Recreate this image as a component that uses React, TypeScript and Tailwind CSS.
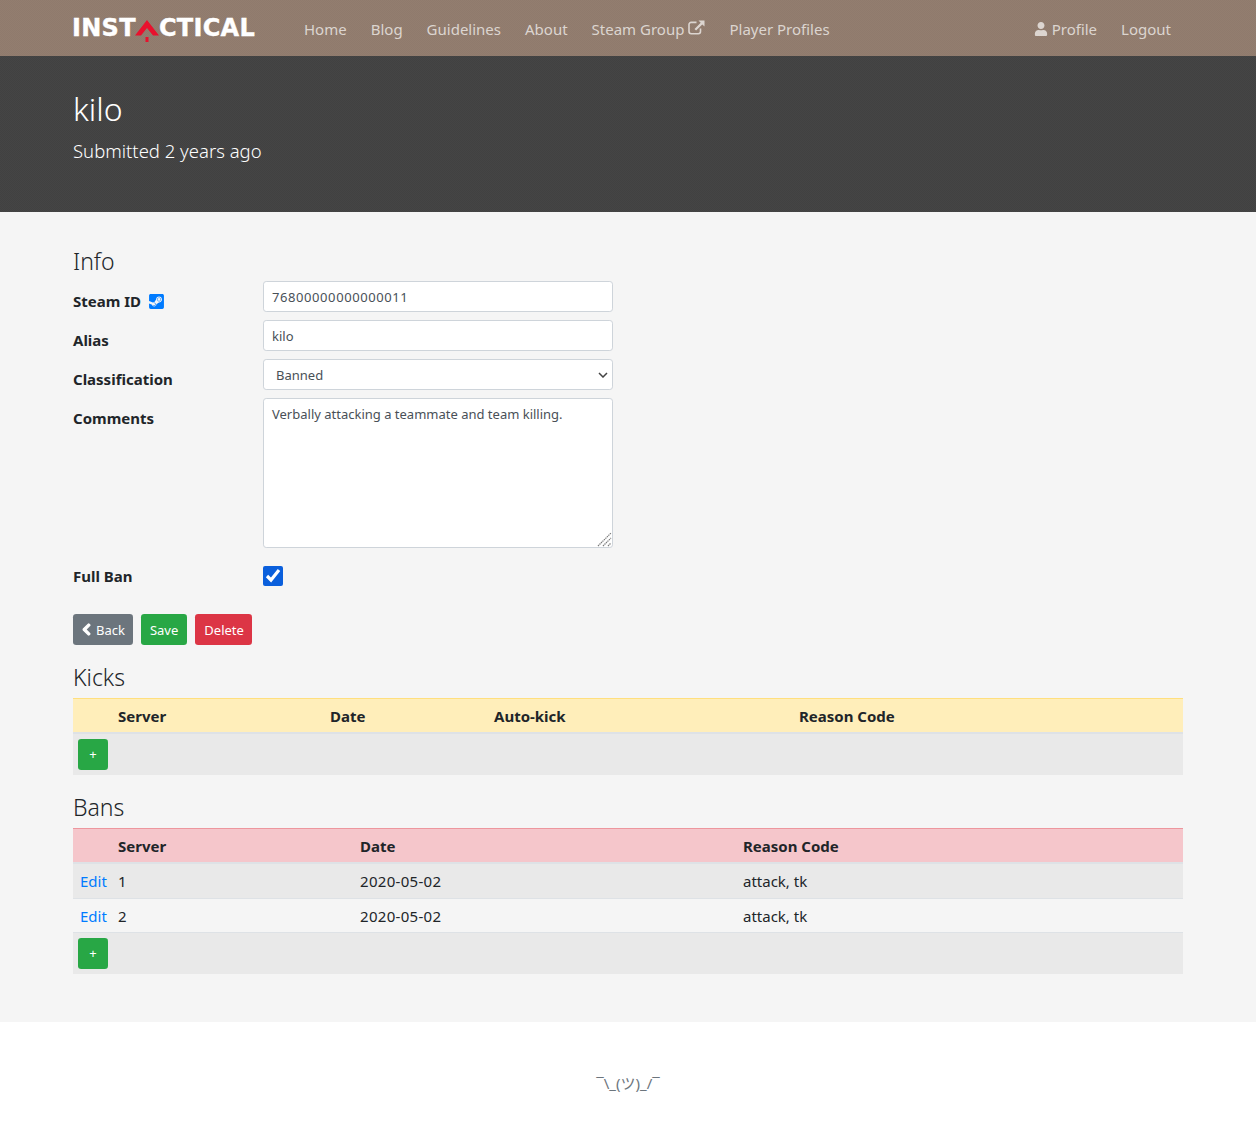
import { FaChevronLeft, FaSteamSquare, FaUser } from "react-icons/fa";

const navLinks = ["Home", "Blog", "Guidelines", "About"];

function ExternalLink() {
  return (
    <svg width="17" height="15" viewBox="0 0 17 15" fill="none" className="ml-1 -mt-[3px]">
      <path d="M12.5 8.5v3a2.2 2.2 0 0 1-2.2 2.2H3.2A2.2 2.2 0 0 1 1 11.5V4.6a2.2 2.2 0 0 1 2.2-2.2h5.3" stroke="currentColor" strokeWidth="1.6" />
      <path d="M10.5 0.6h6v6l-2.2-2.2-6.2 6.2-1.6-1.6 6.2-6.2z" fill="currentColor" />
    </svg>
  );
}

function Logo() {
  return (
    <div className="-ml-px flex w-[220px] items-center font-['DejaVu_Sans',sans-serif] text-[24px] leading-none font-bold tracking-[0.3px] text-white [-webkit-text-stroke:0.4px_white]">
      <span>INST</span>
      <svg width="24" height="22" viewBox="0 0 24 22" className="-ml-px mt-[6px] shrink-0">
        <path d="M12 0 24 15.5h-6L12 8 6 15.5H0z" fill="#e8112d" />
        <rect x="10.5" y="17" width="3" height="5" fill="#e8112d" />
      </svg>
      <span>CTICAL</span>
    </div>
  );
}

function Field({ label, children }: { label: React.ReactNode; children: React.ReactNode }) {
  return (
    <div className="mb-2 flex">
      <div className="w-[190px] pt-[9px] text-[15px] leading-[22px] font-bold text-[#212529]">{label}</div>
      <div className="w-[350px]">{children}</div>
    </div>
  );
}

const inputCls =
  "block h-[31px] w-full rounded-[3.2px] border border-[#ced4da] bg-white px-2 text-[13px] text-[#495057]";

function AddRow({ cols }: { cols: number }) {
  return (
    <tr className="bg-[#e9e9e9]">
      <td colSpan={cols} className="px-[5px] py-[5px]">
        <button className="block h-[31px] w-[30px] rounded-[3.2px] bg-[#28a745] text-[13px] leading-[31px] text-white">+</button>
      </td>
    </tr>
  );
}

export default function App() {
  return (
    <div className="min-h-[1142px] bg-white font-['Noto_Sans',sans-serif] text-[15px] text-[#212529]">
      <nav className="h-14 bg-[repeating-conic-gradient(#937e6f_0_25%,#8f7a6d_0_50%)] bg-[length:2px_2px]">
        <div className="mx-auto flex h-14 w-[1110px] items-center">
          <Logo />
          <div className="flex flex-1 items-center pt-[2px] text-[#dcd5d0]">
            {navLinks.map((l) => (
              <a key={l} className="px-3">{l}</a>
            ))}
            <a className="flex items-center px-3">Steam Group<ExternalLink /></a>
            <a className="px-3">Player Profiles</a>
            <div className="ml-auto flex items-center">
              <a className="flex items-center px-3">
                <FaUser className="mr-1 text-[14px]" />
                Profile
              </a>
              <a className="px-3">Logout</a>
            </div>
          </div>
        </div>
      </nav>

      <header className="h-[156px] bg-[repeating-conic-gradient(#454545_0_25%,#414141_0_50%)] bg-[length:2px_2px] pt-[34px] text-white">
        <div className="mx-auto w-[1110px]">
          <h1 className="mb-2 text-[32px] leading-[1.2] font-light">kilo</h1>
          <p className="text-[18.5px] leading-[30px] font-light">Submitted 2 years ago</p>
        </div>
      </header>

      <main className="h-[810px] bg-[#f5f5f5] pt-[35px]">
        <div className="mx-auto w-[1110px]">
          <h4 className="mb-[5px] text-[23px] leading-[29px] font-light">Info</h4>
          <Field
            label={
              <span className="flex items-center">
                Steam ID
                <FaSteamSquare className="ml-[7px] text-[17px] text-[#007bff]" />
              </span>
            }
          >
            <input className={`${inputCls} tracking-[0.58px]`} defaultValue="76800000000000011" />
          </Field>
          <Field label="Alias">
            <input className={inputCls} defaultValue="kilo" />
          </Field>
          <Field label="Classification">
            <div className="relative">
              <select className={`${inputCls} appearance-none pt-[2px] pl-3`} defaultValue="Banned">
                <option>Banned</option>
              </select>
              <svg width="10" height="6" viewBox="0 0 10 6" fill="none" className="pointer-events-none absolute top-[13px] right-[5px]">
                <path d="M1 1l4 4 4-4" stroke="#444" strokeWidth="1.5" />
              </svg>
            </div>
          </Field>
          <Field label="Comments">
            <div className="relative">
              <textarea
                className="block h-[150px] w-full resize-none rounded-[3.2px] border border-[#ced4da] bg-white px-2 pt-[5px] pb-1 text-[13px] leading-[21px] text-[#495057]"
                defaultValue="Verbally attacking a teammate and team killing."
              />
              {/* resize grip */}
              <svg width="15" height="15" viewBox="0 0 15 15" className="pointer-events-none absolute right-[1px] bottom-[1px]">
                <path d="M1 14 14 1M6 14 14 6M11 14 14 11" stroke="#7a7a7a" strokeWidth="1.2" strokeDasharray="1.4 0.7" />
              </svg>
            </div>
          </Field>
          <div className="mt-[18px] flex h-5 items-center">
            <div className="w-[190px] leading-5 font-bold">Full Ban</div>
            <input type="checkbox" defaultChecked className="h-5 w-5 accent-[#0a5fdc]" />
          </div>

          <div className="mt-7 flex gap-2 text-[13px] text-white">
            <button className="flex h-[31px] items-center rounded-[3.2px] bg-[#6c757d] pt-[2px] pr-[8px] pl-[7px]">
              <FaChevronLeft stroke="currentColor" strokeWidth={50} className="mr-[3px] -mt-[2px] text-[13px]" />
              Back
            </button>
            <button className="h-[31px] rounded-[3.2px] bg-[#28a745] px-[9px] pt-[2px]">Save</button>
            <button className="h-[31px] rounded-[3.2px] bg-[#dc3545] pt-[2px] pr-[8px] pl-[9px]">Delete</button>
          </div>

          <h4 className="mt-[18px] mb-[6px] text-[23px] leading-[29px] font-light">Kicks</h4>
          <table className="w-full table-fixed border-collapse">
            <colgroup>
              <col className="w-10" />
              <col className="w-[212px]" />
              <col className="w-[164px]" />
              <col className="w-[305px]" />
              <col />
            </colgroup>
            <thead>
              <tr className="border-t border-b-2 border-t-[#ffdf7e] border-b-[#dee2e6] bg-[#ffeeba] text-left font-bold">
                <th className="h-[34px] px-[5px]"></th>
                <th className="px-[5px] pt-px">Server</th>
                <th className="px-[5px] pt-px">Date</th>
                <th className="px-[5px] pt-px">Auto-kick</th>
                <th className="px-[5px] pt-px">Reason Code</th>
              </tr>
            </thead>
            <tbody>
              <AddRow cols={5} />
            </tbody>
          </table>

          <h4 className="mt-[18px] mb-[6px] text-[23px] leading-[29px] font-light">Bans</h4>
          <table className="w-full table-fixed border-collapse">
            <colgroup>
              <col className="w-10" />
              <col className="w-[242px]" />
              <col className="w-[383px]" />
              <col />
            </colgroup>
            <thead>
              <tr className="border-t border-b-2 border-t-[#ed969e] border-b-[#dee2e6] bg-[#f5c6cb] text-left font-bold">
                <th className="h-[35px] px-[5px]"></th>
                <th className="px-[5px] pt-px">Server</th>
                <th className="px-[5px] pt-px">Date</th>
                <th className="px-[5px] pt-px">Reason Code</th>
              </tr>
            </thead>
            <tbody>
              <tr className="h-[35px] border-b border-[#dee2e6] bg-[#e9e9e9]">
                <td className="pl-[7px] text-[#007bff]">Edit</td>
                <td className="px-[5px]">1</td>
                <td className="px-[5px] tracking-[0.3px]">2020-05-02</td>
                <td className="px-[5px]">attack, tk</td>
              </tr>
              <tr className="h-[34px] border-b border-[#dee2e6]">
                <td className="pt-[2px] pl-[7px] text-[#007bff]">Edit</td>
                <td className="px-[5px] pt-[2px]">2</td>
                <td className="px-[5px] pt-[2px] tracking-[0.3px]">2020-05-02</td>
                <td className="px-[5px] pt-[2px]">attack, tk</td>
              </tr>
              <AddRow cols={4} />
            </tbody>
          </table>
        </div>
      </main>

      <footer className="flex h-[120px] items-center justify-center pt-[2px] text-[#6c757d]">
        <span className="font-['Noto_Sans','Noto_Sans_CJK_JP',sans-serif]">¯\_(ツ)_/¯</span>
      </footer>
    </div>
  );
}
